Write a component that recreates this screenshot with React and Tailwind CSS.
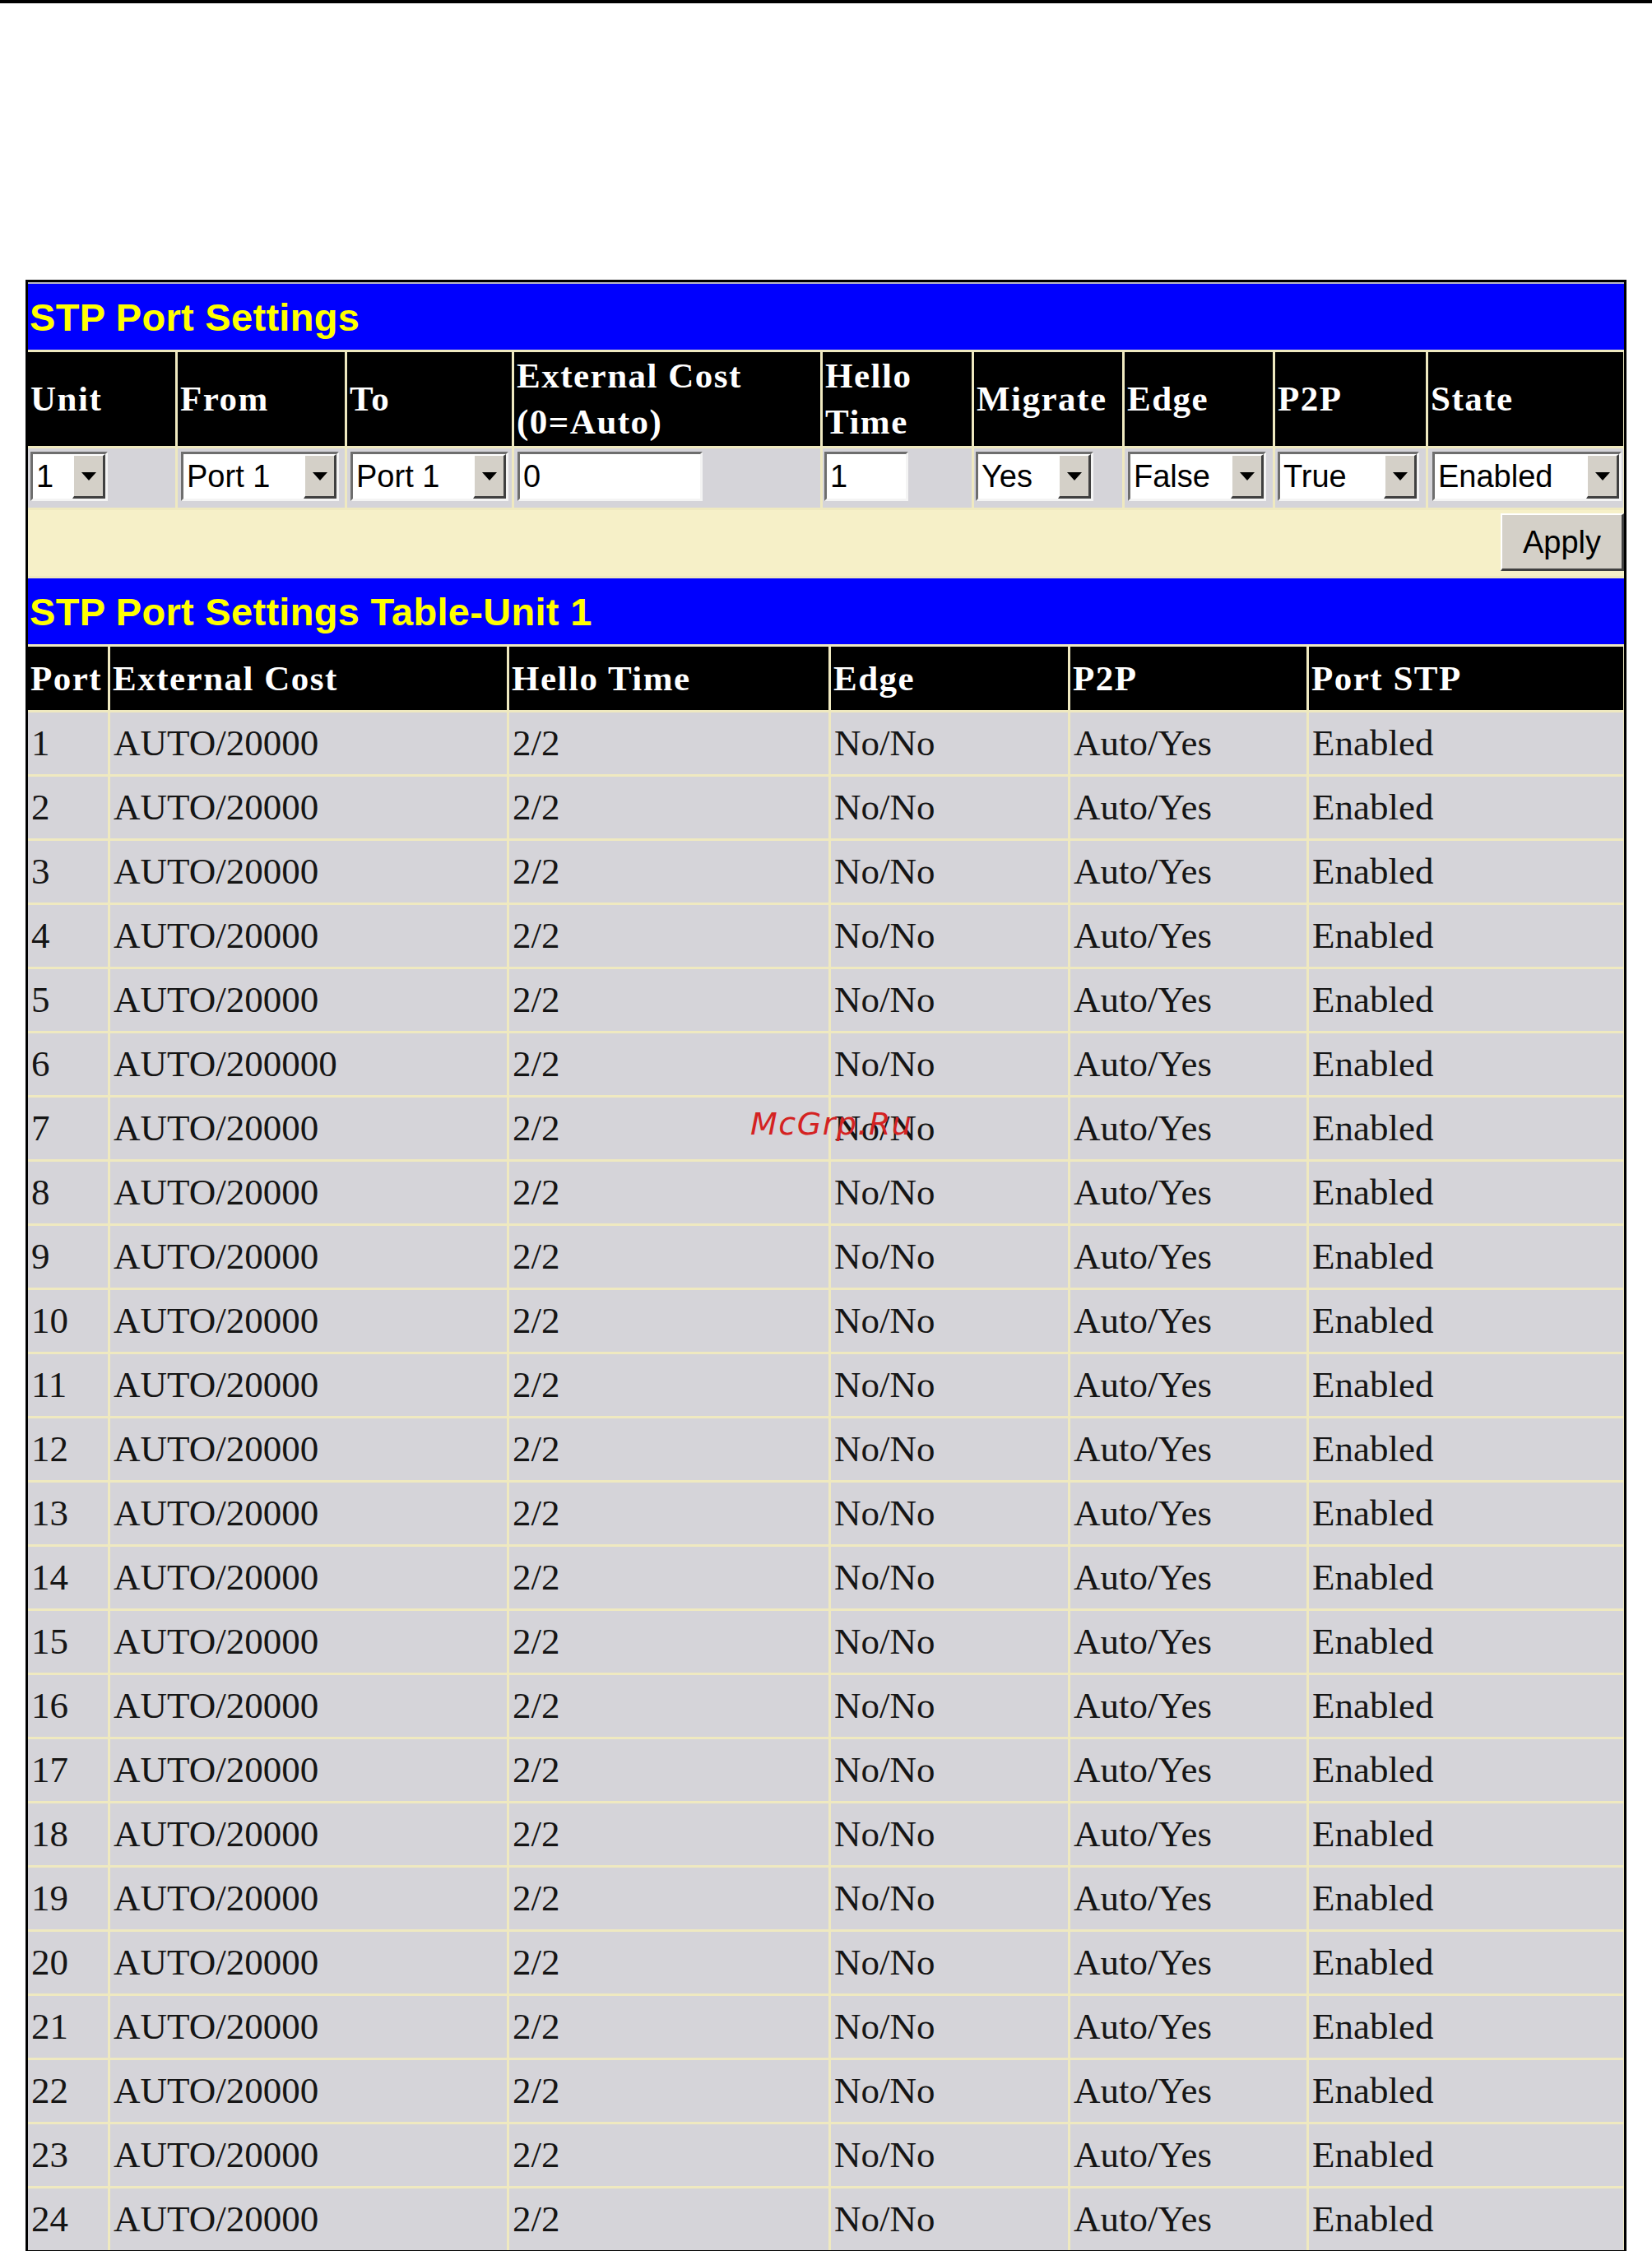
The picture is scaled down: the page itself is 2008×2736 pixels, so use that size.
import React from 'react';

const SERIF = { fontFamily: '"Liberation Serif", "Times New Roman", serif' };
const SANS = { fontFamily: '"Liberation Sans", Arial, sans-serif' };

const ROWS = Array.from({ length: 24 }, (_, i) => ({
  port: String(i + 1),
  cost: i === 5 ? 'AUTO/200000' : 'AUTO/20000',
  hello: '2/2',
  edge: 'No/No',
  p2p: 'Auto/Yes',
  stp: 'Enabled',
}));

const Arrow = () => (
  <div className="w-[40px] h-full bg-[#d4d0c8] border-t-2 border-l-2 border-t-white border-l-white border-b-[3px] border-r-[3px] border-b-[#404040] border-r-[#404040] flex items-center justify-center flex-shrink-0">
    <svg width="20" height="12" viewBox="0 0 20 12">
      <path d="M1 1 L19 1 L10 11 Z" fill="#000" />
    </svg>
  </div>
);

const Sunken = ({ width, children }) => (
  <div
    className="h-[60px] border-t-[3px] border-l-[3px] border-t-[#6e6e6e] border-l-[#6e6e6e] border-b-[3px] border-r-[3px] border-b-[#f4f4f4] border-r-[#f4f4f4] bg-white flex items-stretch"
    style={{ width }}
  >
    {children}
  </div>
);

const Select = ({ width, value }) => (
  <Sunken width={width}>
    <div className="flex-1 flex items-center pl-[4px] text-[38px] text-black leading-none overflow-hidden whitespace-nowrap" style={SANS}>
      {value}
    </div>
    <Arrow />
  </Sunken>
);

const TextInput = ({ width, value }) => (
  <Sunken width={width}>
    <div className="flex-1 flex items-center pl-[4px] text-[38px] text-black leading-none" style={SANS}>
      {value}
    </div>
  </Sunken>
);

const TitleBar = ({ children }) => (
  <div className="h-[80px] bg-[#0000fe] flex items-center pl-[2px]">
    <span className="text-[47px] font-bold text-[#ffff00] leading-none tracking-[0.3px]" style={SANS}>
      {children}
    </span>
  </div>
);

const Head = ({ children }) => (
  <div className="bg-black text-white flex items-center pl-[3px] text-[43px] font-bold tracking-[1.5px] leading-[56px]" style={SERIF}>
    <div>{children}</div>
  </div>
);

const Cell = ({ children }) => (
  <div className="bg-[#d5d4d9] flex items-center pl-[4px] text-[45px] text-[#151515] leading-none whitespace-nowrap" style={SERIF}>
    {children}
  </div>
);

const TOP_COLS = 'grid grid-cols-[179px_203px_200px_372px_181px_180px_180px_183px_237px] gap-x-[3px]';
const BOT_COLS = 'grid grid-cols-[97px_482px_388px_288px_287px_382px] gap-x-[3px]';

export default function App() {
  return (
    <div className="relative w-[2008px] h-[2736px] bg-white overflow-hidden">
      <div className="h-[4px] bg-black" />
      <div className="pt-[336px] pl-[31px]">
        <div className="w-[1946px] border-[3px] border-black bg-[#efe9c0]">
          <div className="h-[2px] bg-[#b8b8c8]" />
          <div className="flex flex-col gap-y-[3px]">
            <TitleBar>STP Port Settings</TitleBar>

            <div className={`${TOP_COLS} h-[114px]`}>
              <Head>Unit</Head>
              <Head>From</Head>
              <Head>To</Head>
              <Head>
                External Cost
                <br />
                (0=Auto)
              </Head>
              <Head>
                Hello
                <br />
                Time
              </Head>
              <Head>Migrate</Head>
              <Head>Edge</Head>
              <Head>P2P</Head>
              <Head>State</Head>
            </div>

            <div className={`${TOP_COLS} h-[72px]`}>
              <div className="bg-[#d5d4d9] pl-[3px] pt-[4px]"><Select width={94} value="1" /></div>
              <div className="bg-[#d5d4d9] pl-[4px] pt-[4px]"><Select width={192} value="Port 1" /></div>
              <div className="bg-[#d5d4d9] pl-[4px] pt-[4px]"><Select width={192} value="Port 1" /></div>
              <div className="bg-[#d5d4d9] pl-[4px] pt-[4px]"><TextInput width={225} value="0" /></div>
              <div className="bg-[#d5d4d9] pl-[2px] pt-[4px]"><TextInput width={102} value="1" /></div>
              <div className="bg-[#d5d4d9] pl-[2px] pt-[4px]"><Select width={143} value="Yes" /></div>
              <div className="bg-[#d5d4d9] pl-[4px] pt-[4px]"><Select width={168} value="False" /></div>
              <div className="bg-[#d5d4d9] pl-[3px] pt-[4px]"><Select width={172} value="True" /></div>
              <div className="bg-[#d5d4d9] pl-[5px] pt-[4px]"><Select width={230} value="Enabled" /></div>
            </div>

            <div className="h-[80px] bg-[#f6f0c8] flex justify-end items-start pt-[4px]">
              <button
                className="w-[150px] h-[70px] bg-[#d4d0c8] border-t-2 border-l-2 border-t-white border-l-white border-b-[3px] border-r-[3px] border-b-[#404040] border-r-[#404040] text-[38px] text-black leading-none"
                style={SANS}
              >
                Apply
              </button>
            </div>

            <TitleBar>STP Port Settings Table-Unit 1</TitleBar>

            <div className={`${BOT_COLS} h-[77px]`}>
              <Head>Port</Head>
              <Head>External Cost</Head>
              <Head>Hello Time</Head>
              <Head>Edge</Head>
              <Head>P2P</Head>
              <Head>Port STP</Head>
            </div>

            {ROWS.map((r) => (
              <div key={r.port} className={`${BOT_COLS} h-[75px]`}>
                <Cell>{r.port}</Cell>
                <Cell>{r.cost}</Cell>
                <Cell>{r.hello}</Cell>
                <Cell>{r.edge}</Cell>
                <Cell>{r.p2p}</Cell>
                <Cell>{r.stp}</Cell>
              </div>
            ))}
          </div>
        </div>
      </div>

      <div
        className="absolute left-[912px] top-[1347px] text-[38px] italic text-[#d42222] tracking-[1.5px] leading-none"
        style={{ fontFamily: '"DejaVu Sans", sans-serif' }}
      >
        McGrp.Ru
      </div>
    </div>
  );
}
